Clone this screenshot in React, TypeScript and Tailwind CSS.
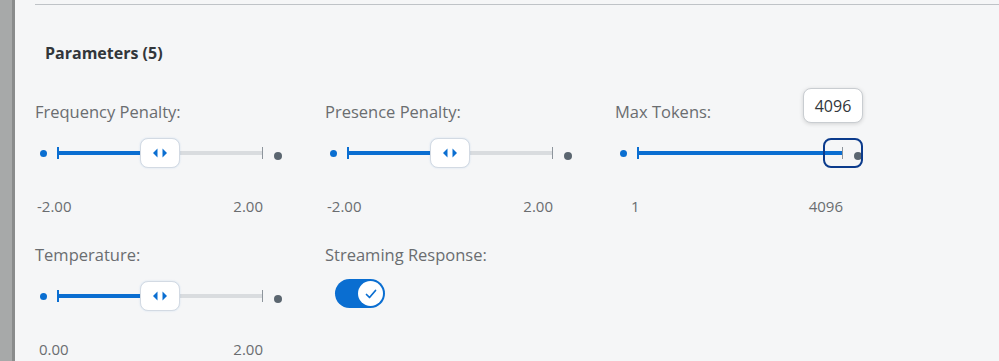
import React from "react";

interface SliderSpec {
  label: string;
  min: string;
  max: string;
  percent: number;
  focused?: boolean;
  tooltip?: string;
  minPad: string;
}

const sliders: SliderSpec[] = [
  { label: "Frequency Penalty:", min: "-2.00", max: "2.00", percent: 50, minPad: "pl-[2px]" },
  { label: "Presence Penalty:", min: "-2.00", max: "2.00", percent: 50, minPad: "pl-[2px]" },
  { label: "Max Tokens:", min: "1", max: "4096", percent: 100, focused: true, tooltip: "4096", minPad: "pl-[16px]" },
];

function Arrows() {
  return (
    <svg width="16" height="10" viewBox="0 0 16 10" className="block">
      <path d="M5.5 0.5 L1 5 L5.5 9.5 Z" fill="#0a6ed1" />
      <path d="M10.5 0.5 L15 5 L10.5 9.5 Z" fill="#0a6ed1" />
    </svg>
  );
}

function Slider({ spec }: { spec: SliderSpec }) {
  return (
    <div className="w-[290px] flex flex-col">
      <div className="text-[16.5px] leading-[20px] text-[#6a6d70]">{spec.label}</div>
      <div className="mt-[16px] h-[30px] flex items-center">
        {/* min dot */}
        <div className="ml-[5px] w-[7px] h-[7px] rounded-full bg-[#0a6ed1] flex-none" />
        {/* track */}
        <div className="ml-[10px] relative w-[206px] h-[4px] bg-[#d9dcdf] flex-none">
          <div className="absolute left-0 top-0 h-full bg-[#0a6ed1]" style={{ width: `${spec.percent}%` }} />
          <div className="absolute left-0 top-[-4px] w-[2px] h-[12px] bg-[#0a6ed1]" />
          <div className="absolute right-0 top-[-4px] w-[1px] h-[12px] bg-[#8d959c]" />
          {spec.focused ? (
            <div
              className="absolute top-[-13px] w-[40px] h-[30px] -translate-x-1/2 rounded-[8px] border-2 border-[#0b3b8c]"
              style={{ left: `${spec.percent}%` }}
            >
              {spec.tooltip && (
                <div className="absolute right-[-2px] bottom-[calc(100%+17px)] w-[60px] h-[35px] rounded-[8px] bg-white border border-[#c9cdd1] shadow-[0_1px_4px_rgba(0,0,0,0.15)] flex items-center justify-center text-[16px] text-[#32363a]">
                  {spec.tooltip}
                </div>
              )}
            </div>
          ) : (
            <div
              className="absolute top-[-13px] w-[40px] h-[30px] -translate-x-1/2 rounded-[8px] bg-white border border-[#d3dae3] shadow-[0_0_2px_rgba(10,110,209,0.15)] flex items-center justify-center"
              style={{ left: `${spec.percent}%` }}
            >
              <Arrows />
            </div>
          )}
        </div>
        {/* max dot */}
        <div className="ml-[11px] mt-[6px] w-[8px] h-[8px] rounded-full bg-[#5b6670] flex-none" />
      </div>
      <div className={`mt-[28px] w-[228px] flex justify-between text-[15px] leading-[20px] text-[#6a6d70] ${spec.minPad}`}>
        <span>{spec.min}</span>
        <span>{spec.max}</span>
      </div>
    </div>
  );
}

export default function App() {
  return (
    <div className="w-full h-[361px] bg-[#f5f6f7] flex overflow-hidden font-['Open_Sans',sans-serif]">
      {/* left edge */}
      <div className="flex flex-none">
        <div className="w-[12px] bg-[#a7a9a9]" />
        <div className="w-[3px] bg-[#8a8c8c]" />
      </div>

      <div className="flex-1 pl-[20px] pt-[4px]">
        <div className="h-[1px] bg-[#bfc3c7]" />

        <h2 className="mt-[38px] ml-[10px] text-[16px] leading-[20px] font-bold text-[#32363a]">Parameters (5)</h2>

        <div className="mt-[39px] flex">
          {sliders.map((s) => (
            <Slider key={s.label} spec={s} />
          ))}
        </div>

        <div className="mt-[29px] flex">
          <Slider spec={{ label: "Temperature:", min: "0.00", max: "2.00", percent: 50, minPad: "pl-[4px]" }} />
          <div className="w-[290px] flex flex-col">
            <div className="text-[16.5px] leading-[20px] text-[#6a6d70]">Streaming Response:</div>
            <div className="mt-[14px] ml-[10px] w-[50px] h-[29px] rounded-full bg-[#0a6ed1] flex items-center justify-end pr-[2px]">
              <div className="w-[25px] h-[25px] rounded-full bg-white flex items-center justify-center">
                <svg width="14" height="14" viewBox="0 0 14 14">
                  <path d="M2.5 7.5 L5.5 10.5 L11.5 3.5" fill="none" stroke="#0a6ed1" strokeWidth="1.7" strokeLinecap="round" strokeLinejoin="round" />
                </svg>
              </div>
            </div>
          </div>
        </div>
      </div>
    </div>
  );
}
